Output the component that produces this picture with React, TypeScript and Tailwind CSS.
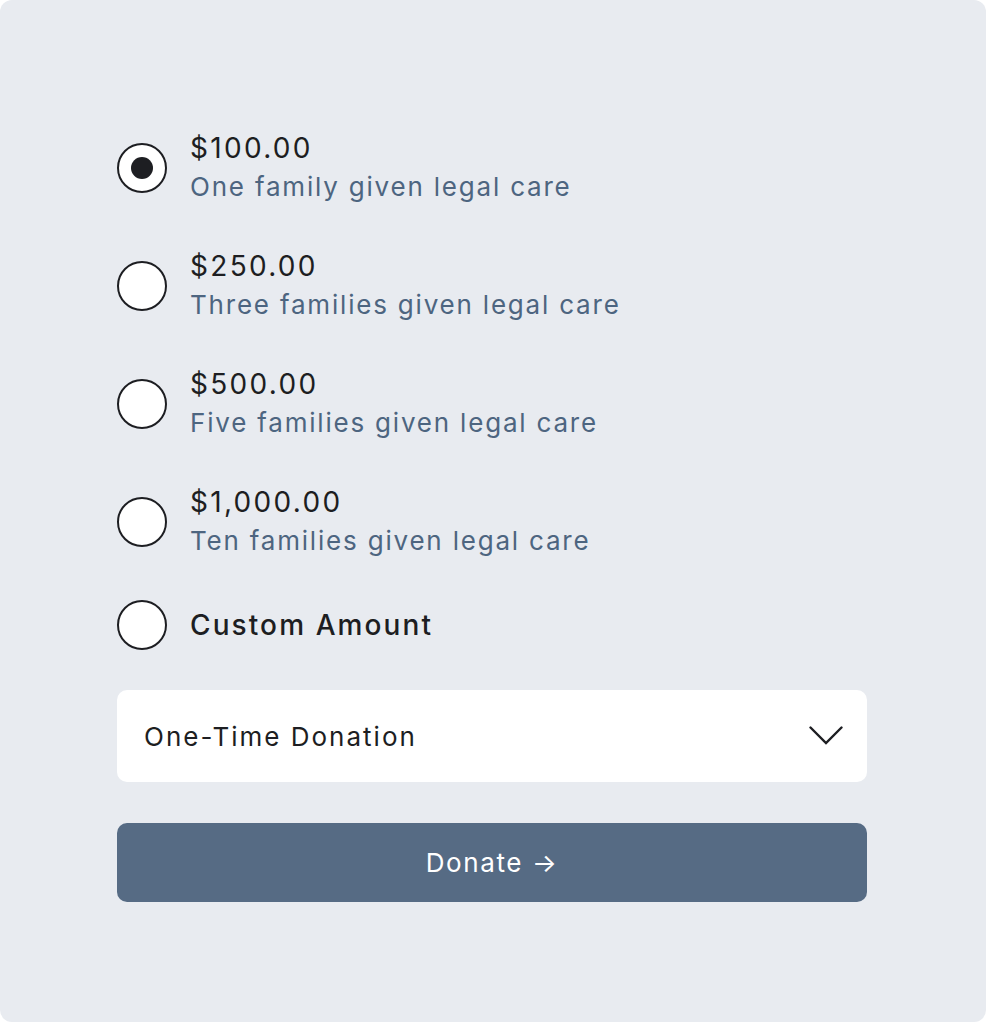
import { useState } from 'react'

const OPTIONS = [
  { id: '100', amount: '$100.00', note: 'One family given legal care' },
  { id: '250', amount: '$250.00', note: 'Three families given legal care' },
  { id: '500', amount: '$500.00', note: 'Five families given legal care' },
  { id: '1000', amount: '$1,000.00', note: 'Ten families given legal care' },
]

function Radio({ checked }: { checked: boolean }) {
  return (
    <span className="flex h-[50px] w-[50px] shrink-0 items-center justify-center rounded-full border-2 border-[#1d1e22] bg-white">
      {checked && <span className="h-[22px] w-[22px] rounded-full bg-[#1d1e22]" />}
    </span>
  )
}

export default function App() {
  const [selected, setSelected] = useState('100')

  return (
    <div
      className="h-[1022px] w-[986px] rounded-[12px] bg-[#e8ebf0] pl-[117px] pt-[130px]"
      style={{ fontFamily: 'Inter, "Noto Sans", sans-serif' }}
    >
      <div className="w-[750px]">
        <div className="flex flex-col gap-[43px]">
          {OPTIONS.map((option) => (
            <button
              key={option.id}
              type="button"
              onClick={() => setSelected(option.id)}
              className="flex items-center gap-[23px] text-left"
            >
              <Radio checked={selected === option.id} />
              <span className="flex flex-col">
                <span className="text-[28px] leading-[36px] tracking-[2.3px] text-[#1d1e22]">
                  {option.amount}
                </span>
                <span className="mt-[3px] text-[26px] leading-[36px] tracking-[1.8px] text-[#4d6580]">
                  {option.note}
                </span>
              </span>
            </button>
          ))}
        </div>

        <button
          type="button"
          onClick={() => setSelected('custom')}
          className="mt-[41px] flex items-center gap-[23px] text-left"
        >
          <Radio checked={selected === 'custom'} />
          <span className="text-[28px] font-medium tracking-[2.1px] text-[#1d1e22]">Custom Amount</span>
        </button>

        <div className="mt-[40px] flex h-[92px] items-center justify-between rounded-[10px] bg-white pl-[27px] pr-[24px]">
          <span className="text-[26px] tracking-[2px] text-[#1d1e22]">One-Time Donation</span>
          <svg width="34" height="20" viewBox="0 0 34 20" fill="none" stroke="#1d1e22" strokeWidth="2.4" strokeLinecap="round">
            <path d="M1.5 1.5 L17 17 L32.5 1.5" />
          </svg>
        </div>

        <button
          type="button"
          className="mt-[41px] flex h-[79px] w-full items-center justify-center rounded-[10px] bg-[#566b84] text-[26px] tracking-[1.6px] text-white"
        >
          Donate →
        </button>
      </div>
    </div>
  )
}
